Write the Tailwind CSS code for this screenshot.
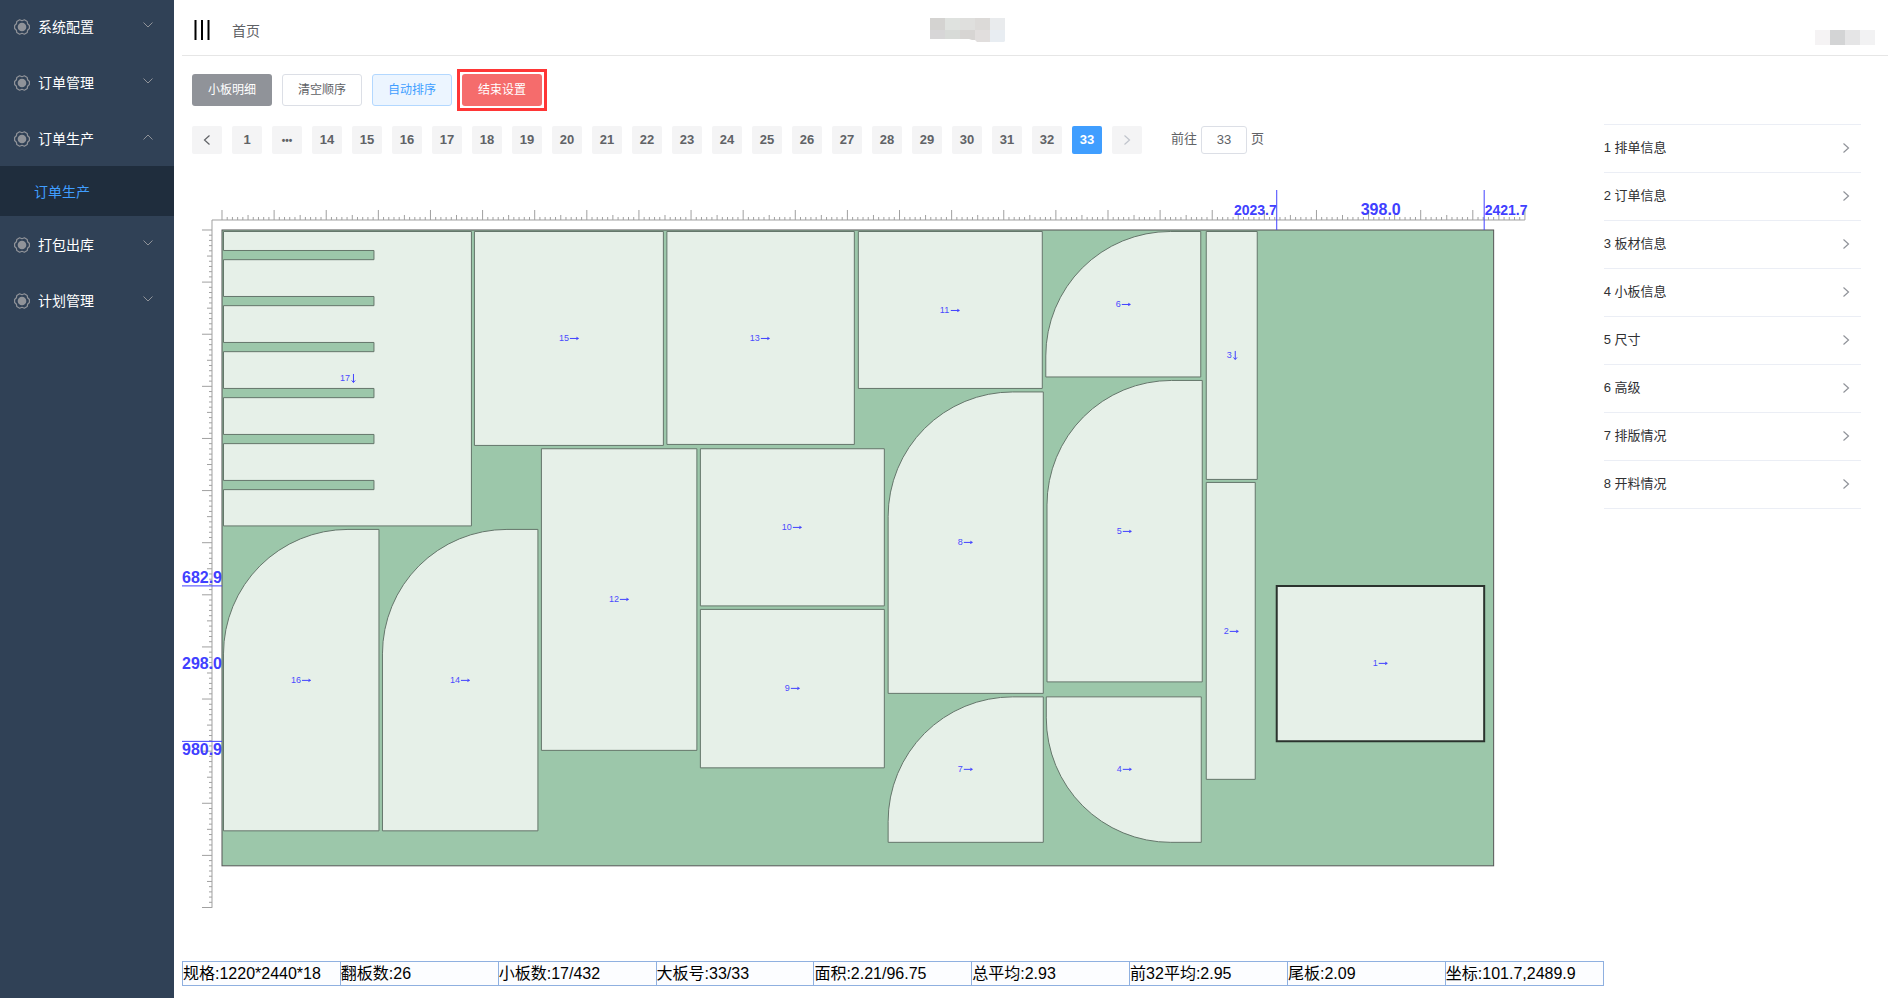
<!DOCTYPE html>
<html lang="zh-CN">
<head>
  <meta charset="UTF-8">
  <meta name="viewport" content="width=device-width, initial-scale=1.0">
  <title>订单生产</title>
  <script src="https://cdn.jsdelivr.net/npm/@tailwindcss/browser@4"></script>
</head>
<body class="bg-white min-h-screen flex font-['Liberation_Sans','Noto_Sans_CJK_SC',sans-serif] text-[#606266]">
  <!-- shared icons -->
  <svg class="hidden">
    <symbol id="gear" viewBox="0 0 16 16">
      <path d="M5.6 .8 8 1.7 10.4.8 13.2 2.4 13.6 4.8 15.4 6.5V9.5L13.6 11.2 13.2 13.6 10.4 15.2 8 14.3 5.6 15.2 2.8 13.6 2.4 11.2.6 9.5V6.5L2.4 4.8 2.8 2.4Z" fill="none" stroke="currentColor" stroke-width="1.2" stroke-linejoin="round"/>
      <circle cx="8" cy="8" r="4.3" fill="currentColor"/>
    </symbol>
    <symbol id="down" viewBox="0 0 12 12">
      <path d="M1.5 3.5 6 8l4.5-4.5" fill="none" stroke="currentColor"/>
    </symbol>
    <symbol id="right" viewBox="0 0 12 12">
      <path d="M3.5 1.5 8.5 6l-5 4.5" fill="none" stroke="currentColor" stroke-width="1.2"/>
    </symbol>
  </svg>

  <aside class="w-[174px] shrink-0 bg-[#304156] text-white text-sm overflow-hidden">
    <nav id="menu" class="-mt-0.5"></nav>
  </aside>

  <main class="flex-1 min-w-0 px-2">
    <header class="h-14 border-b border-[#e6e6e6] flex items-center justify-between relative">
      <div class="flex items-center pl-3 pt-1 gap-[22px]">
        <button aria-label="折叠菜单" class="text-black">
          <svg class="w-4 h-5" viewBox="0 0 16 20"><path d="M1.5 0v20M8 0v20M14.5 0v20" stroke="currentColor" stroke-width="2"/></svg>
        </button>
        <a href="#" class="text-sm leading-5 pt-0.5">首页</a>
      </div>
      <svg class="absolute left-[748px] top-[18px] w-[75px] h-6" viewBox="0 0 75 24">
        <path d="M0 0h15v12H0z" fill="#d4d3d1"/><path d="M15 0h15v12H15z" fill="#dfe2df"/><path d="M30 0h15v12H30z" fill="#dfdfdd"/><path d="M45 0h15v12H45z" fill="#dcdad8"/><path d="M60 0h15v12H60z" fill="#e9ebed"/>
        <path d="M0 12h15v9H0z" fill="#d7d6d7"/><path d="M15 12h15v9H15z" fill="#d8dbd8"/><path d="M30 12h15v10H42l-3-1h-9z" fill="#d7d5d3"/><path d="M45 12h15v12H47l-2-2z" fill="#e1dedd"/><path d="M60 12h15v11l-1 1H60z" fill="#e8edf2"/>
      </svg>
      <svg class="w-[60px] h-[15px] mr-[13px] mt-[19px]" viewBox="0 0 60 15">
        <path d="M0 0h15v15H0z" fill="#f5f3f4"/><path d="M15 0h15v15H15z" fill="#d3d4d5"/><path d="M30 0h15v15H30z" fill="#e5e5e6"/><path d="M45 0h15v15H45z" fill="#f2f2f3"/>
      </svg>
    </header>

    <div class="grid grid-cols-6">
      <section class="col-span-5">
        <div class="flex gap-2.5 pl-2.5 pt-[18px] text-xs">
          <button class="w-20 h-8 rounded-[3px] bg-[#909399] text-white">小板明细</button>
          <button class="w-20 h-8 rounded-[3px] border border-[#dcdfe6]">清空顺序</button>
          <button class="w-20 h-8 rounded-[3px] border border-[#b3d8ff] bg-[#ecf5ff] text-[#409eff]">自动排序</button>
          <div class="-m-[5px] p-0.5 border-[3px] border-[#ff3636]">
            <button class="w-20 h-8 rounded-[3px] bg-[#f56c6c] text-white">结束设置</button>
          </div>
        </div>

        <div class="flex gap-2.5 pl-2.5 mt-5 text-[13px]">
          <div id="pager" class="flex gap-2.5 font-bold"></div>
          <div class="flex items-center gap-1 ml-[19px]">
            <label for="jump" class="pb-0.5">前往</label>
            <input id="jump" type="text" value="33" class="w-[46px] h-7 pb-0.5 rounded-[3px] border border-[#dcdfe6] text-center">
            <span class="pb-0.5">页</span>
          </div>
        </div>

        <svg id="board" class="block w-full mt-9" viewBox="0 0 1422 760"></svg>

        <ul id="status" class="mt-[11px] grid grid-cols-9 h-[25px] text-base leading-6 text-black whitespace-nowrap bg-[#fcfdff] border-y border-r border-[#8fb0e0]"></ul>
      </section>

      <section class="pt-[68px] pr-[27px] text-[13px] text-[#303133]">
        <div id="panels" class="border-t border-[#ebeef5]"></div>
      </section>
    </div>
  </main>

  <script>
    const menu = [
      { title: '系统配置' },
      { title: '订单管理' },
      { title: '订单生产', children: ['订单生产'] },
      { title: '打包出库' },
      { title: '计划管理' },
    ];
    document.getElementById('menu').innerHTML = menu.map(m => `
      <button class="w-full h-14 pl-3.5 pr-5 flex items-center text-left">
        <svg class="w-4 h-4 mt-0.5 text-[#909399]"><use href="#gear"/></svg>
        <span class="ml-2 mt-0.5 flex-1">${m.title}</span>
        <svg class="w-3 h-3 -mt-0.5 text-[#909399] ${m.children ? 'rotate-180' : ''}"><use href="#down"/></svg>
      </button>
      ${(m.children || []).map(c => `<a href="#" class="flex items-center h-[50px] pt-0.5 pl-[34px] bg-[#1f2d3d] text-[#409eff]">${c}</a>`).join('')}
    `).join('');

    const current = 33;
    const pages = [1, '•••'];
    for (let i = 14; i <= current; i++) pages.push(i);
    const pageBtn = 'w-[30px] h-7 rounded-[2px] flex items-center justify-center ';
    document.getElementById('pager').innerHTML =
      `<button aria-label="上一页" class="${pageBtn} bg-[#f4f4f5]"><svg class="w-3 h-3 rotate-180"><use href="#right"/></svg></button>` +
      pages.map(p => {
        const look = p === current ? 'bg-[#409eff] text-white' : 'bg-[#f4f4f5]';
        return `<button class="${pageBtn} ${look} ${p === '•••' ? 'text-[10px]' : ''}">${p}</button>`;
      }).join('') +
      `<button aria-label="下一页" disabled class="${pageBtn} bg-[#f4f4f5] text-[#c0c4cc]"><svg class="w-3 h-3"><use href="#right"/></svg></button>`;

    const panels = ['排单信息', '订单信息', '板材信息', '小板信息', '尺寸', '高级', '排版情况', '开料情况'];
    document.getElementById('panels').innerHTML = panels.map((p, i) => `
      <button class="w-full h-12 pr-[9px] pb-0.5 flex items-center justify-between border-b border-[#ebeef5]">
        <span>${i + 1} ${p}</span>
        <svg class="w-3 h-3 text-[#909399]"><use href="#right"/></svg>
      </button>
    `).join('');

    const status = ['规格:1220*2440*18', '翻板数:26', '小板数:17/432', '大板号:33/33', '面积:2.21/96.75', '总平均:2.93', '前32平均:2.95', '尾板:2.09', '坐标:101.7,2489.9'];
    document.getElementById('status').innerHTML = status.map(s => `<li class="border-l border-[#8fb0e0]">${s}</li>`).join('');

    // cutting board, 1220 x 2440 mm
    const scale = 0.5213;
    const ox = 40, oy = 40;
    // id, left, top, right, bottom, shape
    const pieces = [
      [17, 41.5, 41.5, 289.5, 336, 'comb'],
      [16, 41.5, 339.5, 197, 641, 'tl'],
      [15, 292.5, 41.5, 481.5, 255.5],
      [14, 200.5, 339.5, 356, 641, 'tl'],
      [13, 485, 41.5, 672.5, 254.5],
      [12, 359.5, 258.8, 515, 560.5],
      [11, 676.5, 41.5, 860.5, 198.5],
      [10, 518.5, 258.8, 702.5, 416],
      [9, 518.5, 419.5, 702.5, 578],
      [8, 706.3, 202, 861.5, 503.5, 'tl'],
      [7, 706.3, 507, 861.5, 652.5, 'tl'],
      [6, 864, 41.5, 1019, 187, 'tl'],
      [5, 865.2, 190.5, 1020.5, 492, 'tl'],
      [4, 864.5, 507, 1019.5, 652.5, 'bl'],
      [3, 1024.5, 41.5, 1075.5, 289.5],
      [2, 1024.5, 292.5, 1073.5, 589.5],
      [1, 1095, 396, 1302.5, 551.5],
    ];
    const vertical = [17, 3];
    const r = 124.5;

    function outline([id, x1, y1, x2, y2, shape]) {
      if (shape === 'tl') return `M${x1} ${y2}V${y1 + r}A${r} ${r} 0 0 1 ${x1 + r} ${y1}H${x2}V${y2}Z`;
      if (shape === 'bl') return `M${x1} ${y1}V${y2 - r}A${r} ${r} 0 0 0 ${x1 + r} ${y2}H${x2}V${y1}Z`;
      if (shape === 'comb') {
        let d = `M${x1} ${y1}`;
        for (let i = 0; i < 6; i++) {
          const y = 60.5 + i * 46;
          d += `V${y}H192V${y + 9.2}H${x1}`;
        }
        return d + `V${y2}H${x2}V${y1}Z`;
      }
      return `M${x1} ${y1}H${x2}V${y2}H${x1}Z`;
    }

    function label([id, x1, y1, x2, y2]) {
      const digits = 5 * String(id).length;
      const cx = Math.floor((x1 + x2) / 2), cy = Math.floor((y1 + y2) / 2);
      const down = vertical.includes(id);
      const x = cx - Math.ceil((digits + (down ? 4 : 9)) / 2);
      const ax = x + digits;
      const arrow = down
        ? `M${ax + 3.5} ${cy - 4}v8.5m-1.8 -2l1.8 2l1.8 -2`
        : `M${ax + 1} ${cy + 0.5}h8.5m-2 -1.2l2 1.2l-2 1.2`;
      return `<text x="${x}" y="${cy + 3}" class="text-[9px] fill-[#4a4aff]">${id}</text><path d="${arrow}" fill="none" stroke="#4040ff"/>`;
    }

    let ticks = `M30 718V30H${ox + 2500 * scale}`;
    for (let mm = 0; mm <= 2500; mm += 10) {
      const len = mm % 100 === 0 ? 10 : mm % 50 === 0 ? 5 : 3;
      ticks += `M${ox + mm * scale} 30v-${len}`;
      if (mm <= 1300) ticks += `M30 ${oy + mm * scale}h-${len}`;
    }

    document.getElementById('board').innerHTML = `
      <path d="${ticks}" fill="none" stroke="#a0a0a0"/>
      <rect x="${ox}" y="${oy}" width="${2440 * scale}" height="${1220 * scale}" fill="#9cc7aa" stroke="#555"/>
      ${pieces.map(p => `<path d="${outline(p)}" fill="#e6f0e8" stroke="${p[0] === 1 ? '#2b332e' : '#64756a'}" stroke-width="${p[0] === 1 ? 2 : 1}"/>${label(p)}`).join('')}
      <path d="M1095 0v40M1302.5 0v40M0 396h40M0 551.5h40" stroke="#4040ff"/>
      <g class="font-bold fill-[#4040ff]">
        <text x="1095" y="25" text-anchor="end" class="text-sm">2023.7</text>
        <text x="1199" y="25" text-anchor="middle" class="text-base">398.0</text>
        <text x="1303" y="25" class="text-sm">2421.7</text>
        <text x="0" y="393" class="text-base">682.9</text>
        <text x="0" y="479" class="text-base">298.0</text>
        <text x="0" y="565" class="text-base">980.9</text>
      </g>`;
  </script>
</body>
</html>
